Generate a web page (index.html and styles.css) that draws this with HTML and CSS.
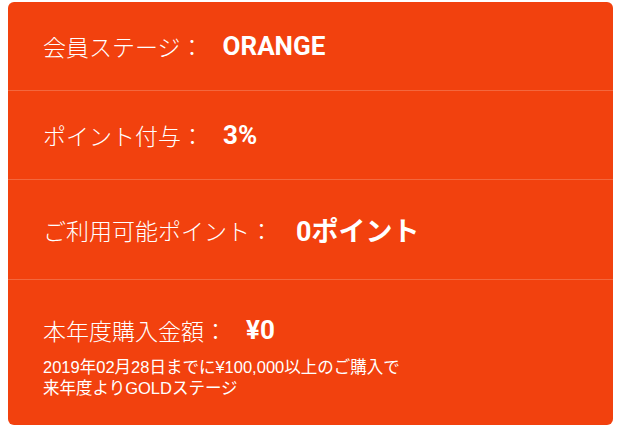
FILE: index.html
```html
<!DOCTYPE html>
<html lang="ja">
<head>
    <meta charset="UTF-8">
    <meta name="viewport" content="width=device-width, initial-scale=1.0">
    <title>会員情報</title>
    <link rel="stylesheet" href="styles.css">
</head>
<body>

    <div class="card">
        <div class="row">
            <span class="label">会員ステージ：</span>
            <span class="value stage">ORANGE</span>
        </div>
        <div class="row">
            <span class="label">ポイント付与：</span>
            <span class="value">3%</span>
        </div>
        <div class="row points">
            <span class="label">ご利用可能ポイント：</span>
            <span class="value big">0ポイント</span>
        </div>
        <div class="row total">
            <div class="line">
                <span class="label">本年度購入金額：</span>
                <span class="value">¥0</span>
            </div>
            <p class="note">2019年02月28日までに¥100,000以上のご購入で<br>来年度よりGOLDステージ</p>
        </div>
    </div>

</body>
</html>
```

FILE: styles.css
```css
* { margin: 0; padding: 0; box-sizing: border-box; }
body {
    background: #fff;
    font-family: "Liberation Sans", "Noto Sans CJK JP", sans-serif;
    color: #fff;
    padding: 2px 0 0 8px;
}
.card {
    width: 605px;
    background: #f2410e;
    border-radius: 6px;
    overflow: hidden;
}
.row {
    display: flex;
    align-items: center;
    height: 89px;
    padding: 0 35px;
    border-bottom: 1px solid rgba(255, 255, 255, 0.2);
}
.row.points { height: 100px; }
.row.total {
    display: block;
    height: 145px;
    padding-top: 28px;
    border-bottom: none;
}
.line {
    display: flex;
    align-items: center;
    height: 43px;
}
.label {
    font-size: 23px;
    font-family: "Noto Sans CJK JP", sans-serif;
    font-weight: 300;
}
.value {
    margin-left: 19px;
    font-family: "Roboto", "Noto Sans CJK JP", sans-serif;
    font-weight: bold;
    font-size: 26px;
}
.value.big { margin-left: 23px; font-size: 27px; }
.note {
    margin-top: 6px;
    font-size: 16.5px;
    line-height: 21px;
}
```
